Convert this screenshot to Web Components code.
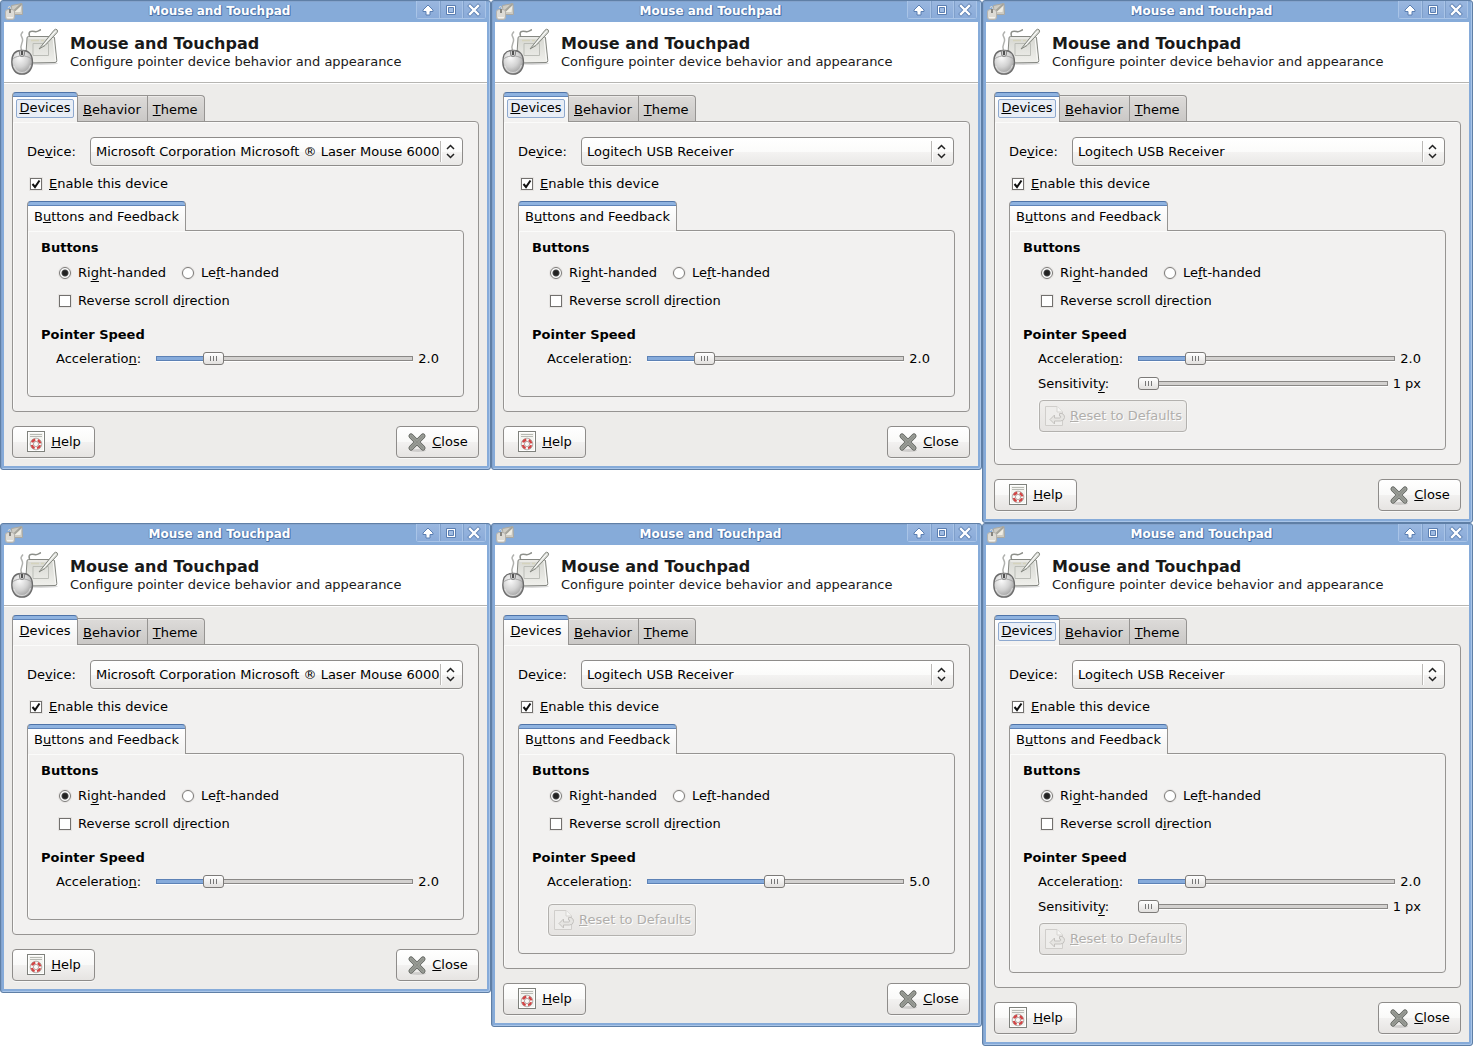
<!DOCTYPE html>
<html lang="en">
<head>
<meta charset="utf-8">
<title>Mouse and Touchpad</title>
<style>
  body { margin: 0; background: #fff; font: 13px/16px "DejaVu Sans", sans-serif; color: #000; }
  main { display: grid; grid-template-columns: repeat(3, minmax(0, 1fr)); align-items: start; }
</style>
</head>
<body>
<main>
  <mouse-settings device="Microsoft Corporation Microsoft ® Laser Mouse 6000" acceleration="2" focused></mouse-settings>
  <mouse-settings device="Logitech USB Receiver" acceleration="2" focused></mouse-settings>
  <mouse-settings device="Logitech USB Receiver" acceleration="2" sensitivity="1" reset focused></mouse-settings>
  <mouse-settings device="Microsoft Corporation Microsoft ® Laser Mouse 6000" acceleration="2"></mouse-settings>
  <mouse-settings device="Logitech USB Receiver" acceleration="5" reset></mouse-settings>
  <mouse-settings device="Logitech USB Receiver" acceleration="2" sensitivity="1" reset focused></mouse-settings>
</main>

<template id="art-mouse">
  <svg viewBox="0 0 48 48" aria-hidden="true">
    <defs>
      <linearGradient id="pad" x1="0" y1="0" x2="0" y2="1"><stop offset="0" stop-color="#d6d7d1"/><stop offset="1" stop-color="#f0f0ec"/></linearGradient>
      <radialGradient id="body" cx=".38" cy=".3" r=".8"><stop offset="0" stop-color="#fbfbfb"/><stop offset=".5" stop-color="#d2d2d2"/><stop offset="1" stop-color="#8d8d8d"/></radialGradient>
    </defs>
    <ellipse cx="30" cy="35.500" rx="17" ry="1.500" fill="#000" opacity=".14"/>
    <path d="M18.500 8C17 3.500 20 2.500 23.500 3.500S28 2 30 1.800" fill="none" stroke="#8d8f8a" stroke-width="1.500"/>
    <path d="M17.500 8.500Q16 8.500 16 10L14.500 33Q14.500 35 16.500 35L44 34.500Q46 34.500 45.800 32.500L43.500 10Q43.300 8.500 42 8.500Z" fill="url(#pad)" stroke="#858782"/>
    <path d="M17.500 10H42L44.500 33" fill="none" stroke="#fafaf8"/>
    <path d="M22 15.500H37.500V27.500H22Z" fill="none" stroke="#bbbdb7"/>
    <path d="M20 12.500H28M30 12.500H33" stroke="#d5d3bd" stroke-width="1.500"/>
    <path d="M28 21L32 16 43 2.200Q44.500 .5 46 1.700Q47.300 3 46 4.700L34 17.500Z" fill="#dcded8" stroke="#83867f"/>
    <path d="M32.500 17L44.500 3.200" stroke="#fff" stroke-width="1"/>
    <path d="M10.500 22.500C8 17 12.500 15 11.500 11S8.500 8 12 3.500" fill="none" stroke="#b0b1ae" stroke-width="1.500"/>
    <path d="M.8 34C.8 27 4 22.500 10 22.500H12C18 22.500 21.500 27 21.500 34S17.500 46.200 11 46.200 .8 41 .8 34Z" fill="url(#body)" stroke="#6b6b6b" stroke-width="1.300"/>
    <path d="M2.200 30.500C7 27 15 27 20 30.500" fill="none" stroke="#a6a6a6"/>
    <path d="M8.500 22.800V26Q8.500 28.500 11 28.500T13.500 26V22.800Z" fill="#d0d0d0" stroke="#888"/>
    <path d="M11 23V27" stroke="#515151" stroke-width="2"/>
    <path d="M3 38Q5 44.500 11 44.500T19.500 37" fill="none" stroke="#ececec" opacity=".7"/>
  </svg>
</template>

<template id="art-small-mouse">
  <svg viewBox="0 0 18 18" aria-hidden="true">
    <path d="M6.500 3.500L17 1.500 17.500 12.500 7 12.500Z" fill="#ceccc4" stroke="#aaa9a2"/>
    <path d="M9 10L16.500 3 15.500 10Z" fill="#efede4"/>
    <path d="M3 6L4.500 4 6 7" fill="none" stroke="#dad8cf"/>
    <path d="M8 10L16.500 2" stroke="#a5a49c" stroke-width="2"/>
    <rect x=".5" y="7.500" width="9" height="10" rx="2.500" fill="#dddbd5" stroke="#b5b3ae"/>
    <path d="M5 7V11" stroke="#85847f" stroke-width="2"/>
    <path d="M2 15.500H8" stroke="#f4f3ee"/>
  </svg>
</template>

<template id="art-help">
  <svg viewBox="0 0 24 24" aria-hidden="true">
    <rect x="3.500" y="1.500" width="17" height="20" fill="#f4f4f0" stroke="#7f817c"/>
    <rect x="4.500" y="2.500" width="15" height="18" fill="none" stroke="#fff"/>
    <path d="M6 4.500H18M6 6.500H18" stroke="#b8bab4"/>
    <circle cx="12" cy="14" r="5.800" fill="#f7f5f3" stroke="#9b9794" stroke-width=".7"/>
    <circle cx="12" cy="14" r="4.300" fill="none" stroke="#d24545" stroke-width="2.400" stroke-dasharray="4.200 2.555" stroke-dashoffset="-1.277"/>
    <circle cx="12" cy="14" r="2.600" fill="#fbfaf8" stroke="#9a8280" stroke-width=".7"/>
  </svg>
</template>

<template id="art-close">
  <svg viewBox="0 0 24 24" aria-hidden="true">
    <ellipse cx="13" cy="20.500" rx="8" ry="1.500" fill="#000" opacity=".12"/>
    <path d="M6 6L18 18M18 6L6 18" stroke="#5d605b" stroke-width="5" stroke-linecap="round"/>
    <path d="M6 6L18 18M18 6L6 18" stroke="#a5a8a2" stroke-width="3.200" stroke-linecap="round"/>
    <path d="M6 6L18 18M18 6L6 18" stroke="#8d908a" stroke-width="1.600" stroke-linecap="round"/>
  </svg>
</template>

<template id="art-reset">
  <svg viewBox="0 0 24 24" aria-hidden="true">
    <path d="M2.500 2.500H14L19.500 8V21.500H2.500Z" fill="#eeedeb" stroke="#d0cecb"/>
    <path d="M14 2.500V8H19.500" fill="#f6f6f4" stroke="#d6d4d1"/>
    <path d="M7 15.500L11.500 11V14H17Q18 14 17.500 12H16.500V9.500H19Q22 11 21.500 13.500Q21 17 17.500 17H11.500V20Z" fill="#e6e5e2" stroke="#c4c2bf"/>
  </svg>
</template>

<script>
  const art = name => document.getElementById('art-' + name).innerHTML;

  /* "_" marks the letter that serves as the keyboard mnemonic. */
  const mnemonic = text => text.replace(/_(.)/, (m, c) => `<u class="${/[gjpqy]/.test(c) ? 'low' : ''}">${c}</u>`);

  const base = `
    *, *::before, *::after { box-sizing: border-box; }
    :host { display: block; }
    :host([hidden]) { display: none; }
    u { text-decoration: underline 1px; text-decoration-skip-ink: none; text-underline-offset: 1px; }
    u.low { text-underline-offset: 4px; }
    button, input, select { font: inherit; color: inherit; margin: 0; }
    svg { display: block; }
  `;

  class Part extends HTMLElement {
    connectedCallback() {
      if (this.shadowRoot) return;
      this.attachShadow({ mode: 'open' }).innerHTML = `<style>${base}</style>` + this.render();
    }
  }

  customElements.define('dialog-window', class extends Part {
    render() {
      return `
      <style>
        .frame { border: 1px solid #5f7fa6; border-radius: 3px; background: #86abd9; padding: 0 2px 2px;
          box-shadow: inset 1px 1px #84a3cc, inset -1px -1px #a9c5e8; }
        .bar { display: flex; height: 21px; padding: 0 2px; }
        .bar .app { width: 18px; height: 18px; margin-top: 1px; }
        .bar .app svg { width: 18px; height: 18px; }
        h1 { flex: 1; margin: 0; text-align: center; font: bold 12px/21px "DejaVu Sans", sans-serif; color: #fff;
          text-shadow: 1px 1px #4d75ab, 0 1px #4d75ab, 1px 0 #5f86ba, -1px 0 #6f95c8; }
        .ops { display: flex; height: 18px; border: 1px solid #a9c4e7; border-top: 0; border-radius: 0 0 3px 3px; }
        .ops button { width: 23px; height: 17px; padding: 0 0 0 4px; border: 0; background: linear-gradient(#9ab7df, #8aabd9); }
        .ops button:first-child { width: 22px; }
        .ops button + button { border-left: 1px solid #a9c4e7; box-shadow: inset 1px 0 #7f9fca; }
        .ops svg { width: 14px; height: 14px; }
        .body { background: #edecea; margin: 0 1px 1px; }
        header { display: flex; align-items: center; height: 61px; gap: 11px; padding: 0 7px; background: #fff; border-bottom: 1px solid #b6b5b2; }
        header svg { width: 48px; height: 48px; }
        h2 { margin: 0; font: bold 16px/20px "DejaVu Sans", sans-serif; color: #1a1a1a; }
        header p { margin: 0; color: #1a1a1a; }
        .content { padding: 8px; border-top: 1px solid #fff; }
        footer { display: flex; justify-content: space-between; padding-top: 14px; }
      </style>
      <section class="frame" aria-label="Mouse and Touchpad">
        <div class="bar">
          <span class="app">${art('small-mouse')}</span>
          <h1>Mouse and Touchpad</h1>
          <div class="ops">
            <button type="button" aria-label="Roll up"><svg viewBox="0 0 14 14"><path d="M7 2L12 7V8.500H9V12H5V8.500H2V7Z" fill="#fff" stroke="#5b7fb2"/></svg></button>
            <button type="button" aria-label="Maximize"><svg viewBox="0 0 14 14"><path d="M2.500 2.500H11.500V11.500H2.500Z" fill="#fff" stroke="#5b7fb2"/><path d="M4.500 4.500H9.500V9.500H4.500Z" fill="#9fbbe2" stroke="#5b7fb2"/></svg></button>
            <button type="button" aria-label="Close window"><svg viewBox="0 0 14 14"><path d="M3 3L11 11M11 3L3 11" stroke="#5b7fb2" stroke-width="4" stroke-linecap="square"/><path d="M3 3L11 11M11 3L3 11" stroke="#fff" stroke-width="2.400" stroke-linecap="square"/></svg></button>
          </div>
        </div>
        <div class="body">
          <header>${art('mouse')}<div><h2>Mouse and Touchpad</h2><p>Configure pointer device behavior and appearance</p></div></header>
          <div class="content">
            <slot></slot>
            <footer><slot name="actions"></slot></footer>
          </div>
        </div>
      </section>`;
    }
  });

  customElements.define('tab-book', class extends Part {
    render() {
      const tabs = this.getAttribute('tabs').split('|');
      return `
      <style>
        .strip { display: flex; align-items: flex-end; }
        button { height: 26px; padding: 2px 6px 0 5px; border: 1px solid #969492; border-left: 0; border-bottom: 0;
          background: linear-gradient(#dddbd9, #cac8c6); box-shadow: inset 0 1px #eceae8; white-space: nowrap; }
        button:last-child { border-top-right-radius: 4px; }
        button.on { position: relative; min-width: 66px; height: 30px; margin-bottom: -1px; padding: 1px 3px 0; border: 1px solid #969492; border-bottom: 0;
          border-top: 1px solid #4f74a8; border-radius: 4px 4px 0 0; background: linear-gradient(#8fb3e0 0 3px, #5f84b8 3px 4px, #fff 4px, #f2f1f0); box-shadow: none; }
        .on span { display: block; padding: 0 2px 1px; border: 1px solid transparent; border-radius: 2px; }
        :host([focused]) .on span { border-color: #8ea9cf; background: #e9eef6; }
        .page { border: 1px solid #969492; border-radius: 0 4px 4px 4px; background: #f2f1f0; box-shadow: inset 1px 1px #fbfbfa; }
      </style>
      <div class="strip" role="tablist">${tabs.map((t, i) =>
        `<button type="button" role="tab" aria-selected="${!i}" class="${i ? '' : 'on'}"><span>${mnemonic(t)}</span></button>`).join('')}</div>
      <div class="page" role="tabpanel"><slot></slot></div>`;
    }
  });

  customElements.define('push-button', class extends Part {
    render() {
      return `
      <style>
        button { display: flex; align-items: center; justify-content: center; gap: 3px; min-width: 83px; height: 32px; padding: 0 4px 0 2px;
          border: 1px solid #8e8c8a; border-radius: 4px; background: linear-gradient(#fff, #f9f9f8 50%, #f2f1f0 51%, #e6e4e2);
          box-shadow: 0 1px #f8f8f7; white-space: nowrap; }
        button:disabled { padding: 0 4px 0 3px; color: #b0aeab; border-color: #b3b1ae; background: linear-gradient(#efeeec, #e6e4e2); text-shadow: 1px 1px #fff; box-shadow: 0 0 0 1px #f8f8f7; }
        svg { width: 24px; height: 24px; }
      </style>
      <button type="button" ${this.hasAttribute('disabled') ? 'disabled' : ''}>${art(this.getAttribute('icon'))}<span>${mnemonic(this.getAttribute('label'))}</span></button>`;
    }
  });

  customElements.define('check-option', class extends Part {
    render() {
      const type = this.getAttribute('type') || 'checkbox';
      return `
      <style>
        label { display: flex; align-items: center; gap: 7px; height: 24px; white-space: nowrap; }
        input { appearance: none; width: 12px; height: 12px; border: 1px solid #72706e; background: #fff; box-shadow: 0 0 0 1px #e6e4e2; }
        span.box { display: grid; }
        span.box > * { grid-area: 1 / 1; }
        input[type=radio] { border-radius: 50%; border-color: #7c7a78; }
        input[type=radio]:checked { background: radial-gradient(circle, #222 0 2px, #444 3px, #fff 4px); }
        svg { display: none; width: 12px; height: 12px; pointer-events: none; }
        input[type=checkbox]:checked + svg { display: block; }
      </style>
      <label><span class="box"><input type="${type}" ${this.hasAttribute('checked') ? 'checked' : ''}><svg viewBox="0 0 12 12"><path d="M2.500 6L5 9 9.500 2.500" fill="none" stroke="#111" stroke-width="2"/></svg></span><span>${mnemonic(this.getAttribute('label'))}</span></label>`;
    }
  });

  customElements.define('device-picker', class extends Part {
    render() {
      return `
      <style>
        div { display: flex; align-items: center; }
        label { width: 63px; }
        .combo { flex: 1; min-width: 0; display: grid; margin-right: 1px; }
        .combo > * { grid-area: 1 / 1; }
        select { appearance: none; width: 100%; height: 29px; padding: 0 22px 0 5px; border: 1px solid #8e8c8a; border-radius: 4px;
          background: linear-gradient(#fff, #fbfbfa 50%, #f4f3f2 51%, #e9e8e6); box-shadow: 0 1px #fbfbfa; }
        svg { justify-self: end; align-self: center; width: 24px; height: 23px; pointer-events: none; }
      </style>
      <div>
        <label for="device">${mnemonic('De_vice:')}</label>
        <span class="combo">
          <select id="device"><option>${this.getAttribute('device')}</option></select>
          <svg viewBox="0 0 24 23" aria-hidden="true"><path d="M1.500 1V22" stroke="#bab8b5"/><path d="M2.500 1V22" stroke="#fff"/><path d="M8 9L11.500 5.500 15 9M8 14L11.500 17.500 15 14" fill="none" stroke="#222" stroke-width="1.500"/></svg>
        </span>
      </div>`;
    }
  });

  customElements.define('speed-slider', class extends Part {
    render() {
      const a = n => this.getAttribute(n);
      const share = (a('value') - a('min')) / (a('max') - a('min')) * 100;
      return `
      <style>
        div { display: flex; align-items: center; height: 25px; }
        label { width: 100px; }
        output { margin-left: 5px; }
        input { appearance: none; flex: 1; min-width: 0; height: 15px; background: none; --share: ${share}%; }
        input::-webkit-slider-runnable-track { height: 5px; border: 1px solid #8a8886; box-shadow: 0 1px #fff;
          background: linear-gradient(90deg, #86abdb var(--share), #d3d1cf var(--share));
          border-image: linear-gradient(90deg, #5d82b6 var(--share), #8a8886 var(--share)) 1; }
        input::-webkit-slider-thumb { appearance: none; width: 21px; height: 13px; margin: -5px -1px 0; border: 1px solid #7c7a78; border-radius: 3px;
          background: linear-gradient(#777, #777) 6px 3px / 1px 5px no-repeat, linear-gradient(#777, #777) 9px 3px / 1px 5px no-repeat,
            linear-gradient(#777, #777) 12px 3px / 1px 5px no-repeat, linear-gradient(#fff, #e2e0de); }
      </style>
      <div>
        <label for="range">${mnemonic(a('label'))}</label>
        <input id="range" type="range" min="${a('min')}" max="${a('max')}" value="${a('value')}">
        <output for="range">${a('text')}</output>
      </div>`;
    }
  });

  customElements.define('mouse-settings', class extends Part {
    render() {
      const accel = this.getAttribute('acceleration');
      const sens = this.getAttribute('sensitivity');
      return `
      <style>
        .outer { padding: 15px 14px 14px; }
        check-option.enable { margin: 6px 0 5px 3px; }
        .inner { padding: 9px 24px 15px 13px; }
        h3 { margin: 0; font: bold 13px/16px "DejaVu Sans", sans-serif; }
        .options { display: grid; gap: 4px; margin: 5px 0 14px 18px; }
        .hands { display: flex; gap: 16px; }
        .speeds { min-height: 35px; margin: 3px 0 0 15px; padding-bottom: 4px; }
        .reset { display: flex; margin: 0 0 2px 16px; }
      </style>
      <dialog-window>
        <tab-book tabs="_Devices|_Behavior|_Theme" ${this.hasAttribute('focused') ? 'focused' : ''}>
          <div class="outer">
            <device-picker device="${this.getAttribute('device')}"></device-picker>
            <check-option class="enable" label="_Enable this device" checked></check-option>
            <tab-book tabs="B_uttons and Feedback">
              <div class="inner">
                <h3>Buttons</h3>
                <div class="options">
                  <div class="hands">
                    <check-option type="radio" label="Ri_ght-handed" checked></check-option>
                    <check-option type="radio" label="Le_ft-handed"></check-option>
                  </div>
                  <check-option label="Reverse scroll d_irection"></check-option>
                </div>
                <h3>Pointer Speed</h3>
                <div class="speeds">
                  <speed-slider label="Acceleratio_n:" min="0" max="10" value="${accel}" text="${accel}.0"></speed-slider>
                  ${sens ? `<speed-slider label="Sensitivit_y:" min="1" max="64" value="${sens}" text="${sens} px"></speed-slider>` : ''}
                </div>
                ${this.hasAttribute('reset') ? '<div class="reset"><push-button icon="reset" label="_Reset to Defaults" disabled></push-button></div>' : ''}
              </div>
            </tab-book>
          </div>
        </tab-book>
        <push-button slot="actions" icon="help" label="_Help"></push-button>
        <push-button slot="actions" icon="close" label="_Close"></push-button>
      </dialog-window>`;
    }
  });
</script>
</body>
</html>
